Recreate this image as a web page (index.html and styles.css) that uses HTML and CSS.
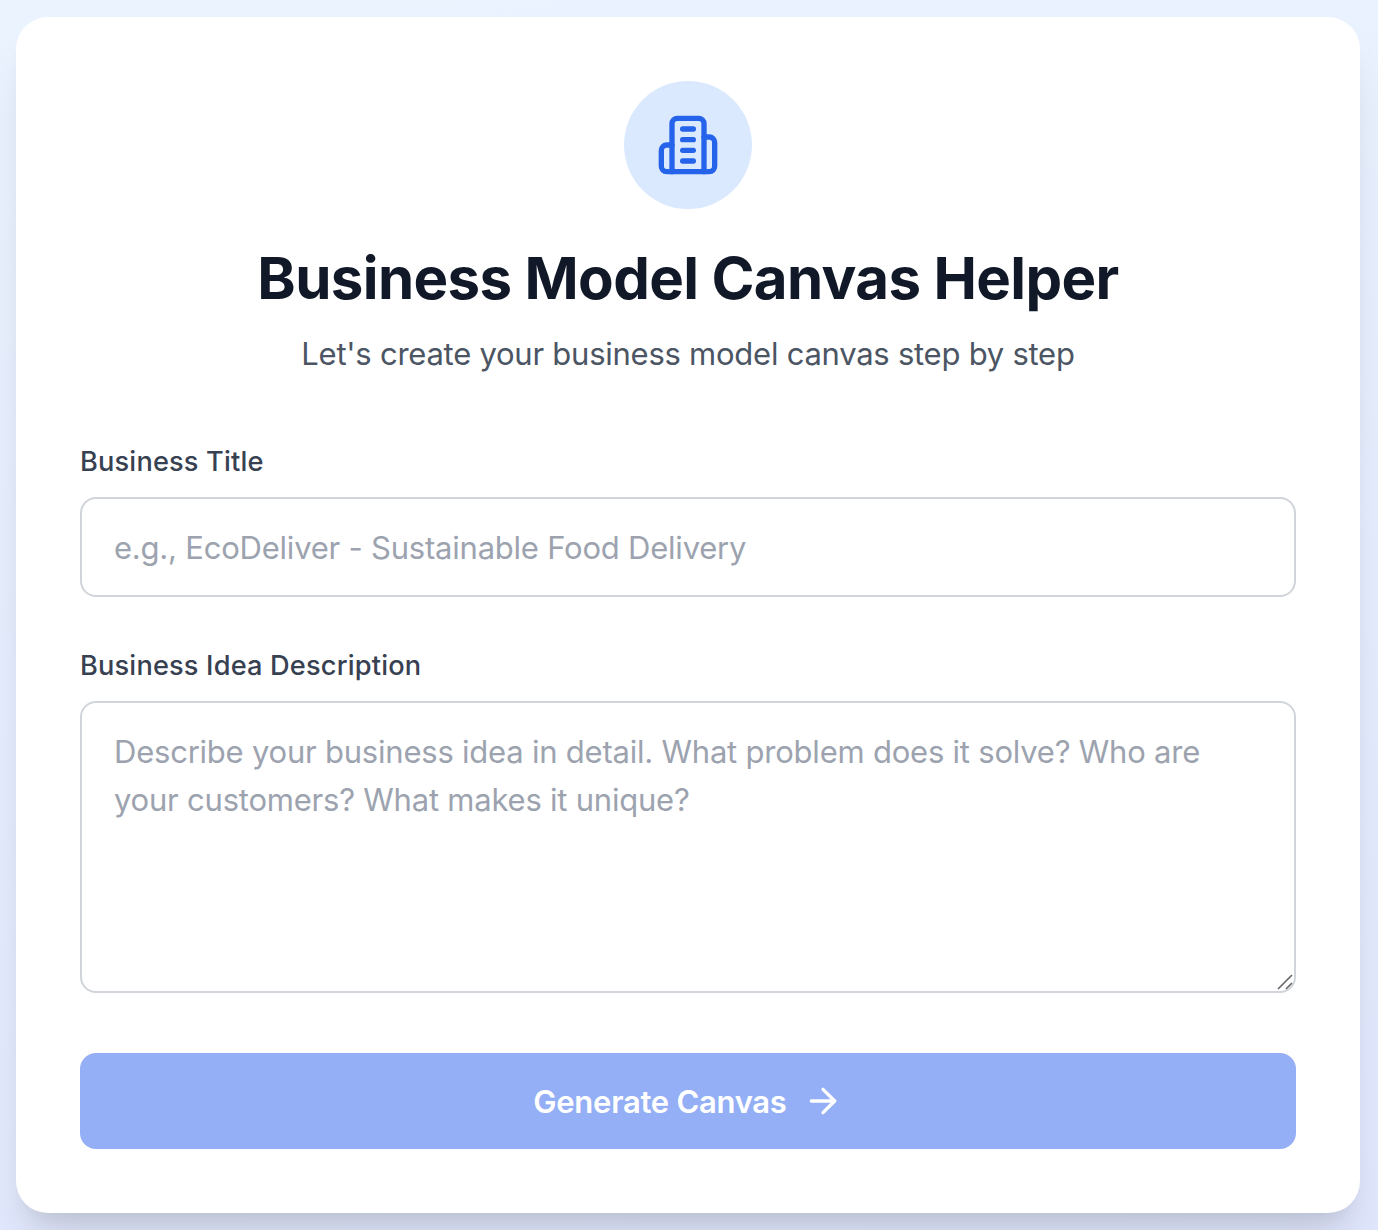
FILE: index.html
```html
<!DOCTYPE html>
<html lang="en">
<head>
    <meta charset="UTF-8">
    <meta name="viewport" content="width=device-width, initial-scale=1.0">
    <title>Business Model Canvas Helper</title>
    <link rel="stylesheet" href="styles.css">
</head>
<body>

<main class="card">
    <header class="card-header">
        <div class="logo">
            <svg class="logo-icon" viewBox="0 0 24 24">
                <path d="M6 22V4a2 2 0 0 1 2-2h8a2 2 0 0 1 2 2v18Z"/>
                <path d="M6 12H4a2 2 0 0 0-2 2v6a2 2 0 0 0 2 2h2"/>
                <path d="M18 9h2a2 2 0 0 1 2 2v9a2 2 0 0 1-2 2h-2"/>
                <path d="M10 6h4"/>
                <path d="M10 10h4"/>
                <path d="M10 14h4"/>
                <path d="M10 18h4"/>
            </svg>
        </div>
        <h1>Business Model Canvas Helper</h1>
        <p class="subtitle">Let's create your business model canvas step by step</p>
    </header>

    <form class="idea-form">
        <div class="field">
            <label for="title">Business Title</label>
            <input type="text" id="title" placeholder="e.g., EcoDeliver - Sustainable Food Delivery">
        </div>

        <div class="field">
            <label for="description">Business Idea Description</label>
            <div class="textarea-wrap">
                <textarea id="description" rows="5" placeholder="Describe your business idea in detail. What problem does it solve? Who are your customers? What makes it unique?"></textarea>
                <svg class="grip" viewBox="0 0 18 18">
                    <path d="M2 16 16 2M10 16l6-6"/>
                </svg>
            </div>
        </div>

        <button type="submit" class="submit" disabled>
            <span class="submit-text">Generate Canvas</span>
            <svg class="arrow" viewBox="0 0 24 24">
                <path d="M5 12h14"/>
                <path d="m12 5 7 7-7 7"/>
            </svg>
        </button>
    </form>
</main>

</body>
</html>
```

FILE: styles.css
```css
* {
    box-sizing: border-box;
}
body {
    font-family: Inter, "Liberation Sans", sans-serif;
    margin: 0;
    padding: 17px 18px 17px 16px;
    height: 1230px;
    overflow: hidden;
    background: linear-gradient(172deg, #ebf3ff, #e1e7fd);
}
.card {
    background-color: white;
    padding: 64px;
    border-radius: 32px;
    box-shadow: 0 40px 50px -10px rgba(0, 0, 0, 0.1), 0 16px 20px -12px rgba(0, 0, 0, 0.1);
}
.card-header {
    text-align: center;
    margin-bottom: 64px;
}
.logo {
    display: flex;
    align-items: center;
    justify-content: center;
    width: 128px;
    height: 128px;
    margin: 0 auto 32px;
    border-radius: 50%;
    background-color: #dbe9fe;
}
.logo-icon, .arrow {
    fill: none;
    stroke: currentColor;
    stroke-width: 2;
    stroke-linecap: round;
    stroke-linejoin: round;
}
.logo-icon {
    width: 64px;
    height: 64px;
    color: #2563eb;
}
h1 {
    margin: 0 0 16px;
    padding-top: 2px;
    font-size: 58.2px;
    line-height: 70px;
    font-weight: 700;
    letter-spacing: -0.64px;
    color: #111827;
}
.subtitle {
    margin: 0;
    padding-top: 2px;
    font-size: 31px;
    line-height: 46px;
    letter-spacing: -0.25px;
    color: #4b5563;
}
.idea-form {
    display: flex;
    flex-direction: column;
    gap: 48px;
}
label {
    display: block;
    margin-bottom: 16px;
    padding-top: 2px;
    font-size: 27.2px;
    line-height: 38px;
    font-weight: 500;
    letter-spacing: 0.17px;
    color: #374151;
}
input, textarea {
    display: block;
    width: 100%;
    padding: 24px 32px;
    border: 2px solid #d1d5db;
    border-radius: 16px;
    background-color: white;
    font-family: inherit;
    font-size: 31px;
    line-height: 48px;
    letter-spacing: -0.22px;
    color: #111827;
}
input {
    height: 100px;
}
textarea {
    height: 292px;
    padding: 25px 32px 23px;
    resize: none;
}
::placeholder {
    color: #9ca3af;
}
.textarea-wrap {
    position: relative;
    margin-bottom: 12px;
}
.grip {
    position: absolute;
    right: 2px;
    bottom: 2px;
    width: 18px;
    height: 18px;
    fill: none;
    stroke: #666;
    stroke-width: 1.6;
    pointer-events: none;
}
.submit {
    display: flex;
    align-items: center;
    justify-content: center;
    gap: 16px;
    height: 96px;
    border: none;
    border-radius: 16px;
    background-color: #94aff5;
    font-family: inherit;
    font-size: 31px;
    line-height: 48px;
    font-weight: 600;
    letter-spacing: -0.27px;
    color: white;
}
.submit-text {
    padding-top: 2px;
}
.arrow {
    width: 40px;
    height: 40px;
}
```
